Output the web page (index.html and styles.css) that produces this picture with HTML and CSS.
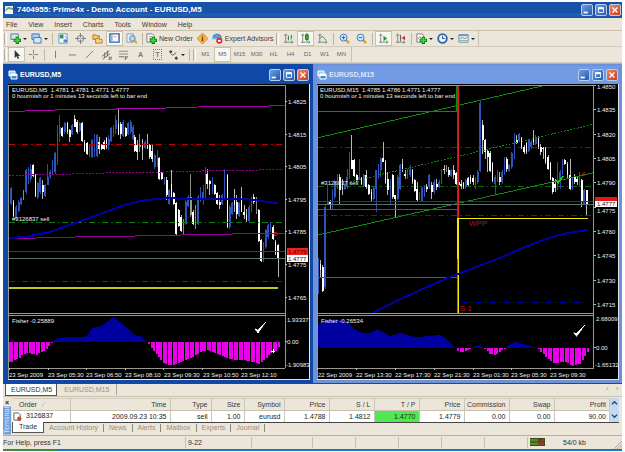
FILE: index.html
```html
<!DOCTYPE html>
<html lang="en">
<head>
<meta charset="utf-8">
<title>7404955: Prime4x - Demo Account - EURUSD,M5</title>
<link rel="stylesheet" href="styles.css">
</head>
<body>
<svg class="defs" aria-hidden="true">
  <defs>
    <symbol id="min" viewBox="0 0 12 12"><path d="M2 8h5v2H2z" fill="#fff"/></symbol>
    <symbol id="max" viewBox="0 0 12 12"><path d="M3 3h6v6H3z" fill="none" stroke="#fff"/><path d="M3 3h6v2H3z" fill="#fff"/></symbol>
    <symbol id="close" viewBox="0 0 12 12"><path d="M3 3l6 6M9 3l-6 6" stroke="#fff" stroke-width="1.6"/></symbol>
    <symbol id="chartwin" viewBox="0 0 10 10"><path d="M1 1h6v5H1z" fill="#9cf" stroke="#fff"/><path d="M3 4h6v5H3z" fill="#48c" stroke="#fff"/><path d="M3 4h6v2H3z" fill="#fff"/></symbol>
    <symbol id="axes" viewBox="0 0 12 12"><path d="M3 1v10M1 10h10M1.500 3L3 1l1.500 2M9 8.500l2 1.500-2 1.500" fill="none" stroke="#7b8480"/></symbol>
    <symbol id="plus" viewBox="0 0 12 12"><path d="M8 4v8M4 8h8" stroke="#0a7a10" stroke-width="3.600"/><path d="M8 5v6M5 8h6" stroke="#3ddc3d" stroke-width="1.800"/></symbol>
  </defs>
</svg>

<main class="app">
  <header class="titlebar">
    <svg class="i10" viewBox="0 0 10 10"><path d="M1 1h8v8H1z" fill="#e8f0ec"/><path d="M1 5l3-3 5 1v3H1z" fill="#7aa27a"/><path d="M1 6l4-2 4 1v4H1z" fill="#f4f4ec"/></svg>
    <h1>7404955: Prime4x - Demo Account - EURUSD,M5</h1>
    <div class="winbtns">
      <button aria-label="Minimize"><svg><use href="#min"/></svg></button>
      <button aria-label="Maximize"><svg><use href="#max"/></svg></button>
      <button class="x" aria-label="Close"><svg><use href="#close"/></svg></button>
    </div>
  </header>

  <nav class="menu">
    <a href="#">File</a><a href="#">View</a><a href="#">Insert</a><a href="#">Charts</a><a href="#">Tools</a><a href="#">Window</a><a href="#">Help</a>
  </nav>

  <div class="toolbar">
    <i class="grip"></i>
    <button class="drop" aria-label="New chart"><svg viewBox="0 0 12 12"><path d="M1 1h8v6H1z" fill="#cfe2ee" stroke="#4a7c9c"/><use href="#plus"/></svg></button>
    <button class="drop" aria-label="Profiles"><svg viewBox="0 0 12 12"><path d="M1 1h8v6H1z" fill="#a9d0f2" stroke="#3a76b4"/><path d="M3 5h8v6H3z" fill="#d6e9f8" stroke="#3a76b4"/></svg></button>
    <i class="sep"></i>
    <button aria-label="Market watch"><svg viewBox="0 0 12 12"><path d="M1 1h9v10H1z" fill="#fff" stroke="#49c"/><path d="M2 2h4v4H2z" fill="#2b9b4b"/><path d="M6 7h4v3H6z" fill="#3a8be0"/><path d="M7 3l3 3" stroke="#e55"/></svg></button>
    <button aria-label="Data window"><svg viewBox="0 0 12 12"><circle cx="6" cy="6" r="3.500" fill="none" stroke="#777"/><path d="M6 0v5M6 7v5M0 6h5M7 6h5" stroke="#777"/></svg></button>
    <button aria-label="Navigator"><svg viewBox="0 0 12 12"><path d="M1 2h3l1 1h3v4H1z" fill="#f3c562" stroke="#b67c20"/><path d="M4 6h3l1 1h3v4H4z" fill="#fbd87f" stroke="#b67c20"/></svg></button>
    <button class="on" aria-label="Terminal"><svg viewBox="0 0 12 12"><path d="M1 1h10v9H1z" fill="#fff" stroke="#2563b5" stroke-width="1.500"/><path d="M2 2h2v7H2z" fill="#8db9e8"/><path d="M5 4h1M7 4h1" stroke="#d33"/></svg></button>
    <button aria-label="Strategy tester"><svg viewBox="0 0 12 12"><path d="M1 1h7v9H1z" fill="#e9f2f8" stroke="#89a"/><circle cx="7" cy="6" r="3" fill="#b8dcf6" stroke="#4678aa"/><path d="M9 8l3 3" stroke="#d39b33" stroke-width="2"/></svg></button>
    <i class="sep"></i>
    <button class="text"><svg viewBox="0 0 12 12"><path d="M1 1h6l2 2v7H1z" fill="#fff" stroke="#777"/><path d="M3 4h4M3 6h3" stroke="#999"/><use href="#plus"/></svg>New Order</button>
    <button aria-label="MetaEditor"><svg viewBox="0 0 12 12"><path d="M6 0l6 6-6 6-6-6z" fill="#f4b342" stroke="#d08c34"/><path d="M6 3v1M6 5v4" stroke="#743c00" stroke-width="1.500"/></svg></button>
    <button class="text"><svg viewBox="0 0 12 12"><path d="M1 5c0-5 9-5 9 0z" fill="#5aa1e0" stroke="#2d6aa8"/><path d="M0 5h11v2H0z" fill="#7fbaf0"/><circle cx="8" cy="8.500" r="3.300" fill="#d92c20"/><path d="M6.500 7.500h3v2h-3z" fill="#fff"/></svg>Expert Advisors</button>
    <i class="grip wide"></i>
    <button aria-label="Bar chart"><svg viewBox="0 0 12 12"><use href="#axes"/><path d="M6 3v5M9 2v5M5 6h1M9 4h1" stroke="#28823a"/></svg></button>
    <button class="on" aria-label="Candlesticks"><svg viewBox="0 0 12 12"><use href="#axes"/><path d="M7.500 0v9" stroke="#176b22"/><path d="M6 2h3v5H6z" fill="#29c13a" stroke="#176b22"/></svg></button>
    <button aria-label="Line chart"><svg viewBox="0 0 12 12"><use href="#axes"/><path d="M3 6c3-4 4-1 7 2" fill="none" stroke="#28823a"/></svg></button>
    <i class="sep"></i>
    <button aria-label="Zoom in"><svg viewBox="0 0 12 12"><path d="M7 7l4 4" stroke="#d5a02e" stroke-width="2.500"/><circle cx="5" cy="5" r="3.800" fill="#cfe9fb" stroke="#3977b5"/><path d="M5 3v4M3 5h4" stroke="#2463a5"/></svg></button>
    <button aria-label="Zoom out"><svg viewBox="0 0 12 12"><path d="M7 7l4 4" stroke="#d5a02e" stroke-width="2.500"/><circle cx="5" cy="5" r="3.800" fill="#cfe9fb" stroke="#3977b5"/><path d="M3 5h4" stroke="#2463a5"/></svg></button>
    <i class="sep"></i>
    <button class="on" aria-label="Auto scroll"><svg viewBox="0 0 12 12"><use href="#axes"/><path d="M6 3l4 3-4 3z" fill="#1b9c2b"/></svg></button>
    <button aria-label="Chart shift"><svg viewBox="0 0 12 12"><use href="#axes"/><path d="M6 2v7" stroke="#555"/><path d="M11 3L7 5.500 11 8z" fill="#c33"/></svg></button>
    <i class="sep"></i>
    <button class="drop" aria-label="Indicators"><svg viewBox="0 0 12 12"><path d="M1 1h6l1 2v7H1z" fill="#fff" stroke="#777"/><path d="M2 7l2-3 2 2" fill="none" stroke="#777"/><use href="#plus"/></svg></button>
    <button class="drop" aria-label="Periods"><svg viewBox="0 0 12 12"><circle cx="6" cy="6" r="4.700" fill="#e6f2fc" stroke="#2a68b4" stroke-width="2"/><path d="M6 3v3h2.500" fill="none" stroke="#345"/></svg></button>
    <button class="drop" aria-label="Templates"><svg viewBox="0 0 12 12"><path d="M1 2h10v8H1z" fill="#fff" stroke="#4a86b8"/><path d="M1 1.500h10v2H1z" fill="#5b9bd5"/><path d="M2 6l3-1 2 1 3-1" fill="none" stroke="#c44"/><path d="M2 8h8" stroke="#5a8"/></svg></button>
    <i class="end"></i>
  </div>

  <div class="toolbar second">
    <i class="grip"></i>
    <button class="on" aria-label="Cursor"><svg viewBox="0 0 12 12"><path d="M4 1v9l2-2 1.500 3 1.500-1-1.500-2.500H10z" fill="#333"/></svg></button>
    <button aria-label="Crosshair"><svg viewBox="0 0 12 12"><path d="M6 1v4M6 7v4M1 6h4M7 6h4" stroke="#777"/></svg></button>
    <i class="sep"></i>
    <button aria-label="Vertical line"><svg viewBox="0 0 12 12"><path d="M6 2v8" stroke="#777"/></svg></button>
    <button aria-label="Horizontal line"><svg viewBox="0 0 12 12"><path d="M2 6.500h8" stroke="#777"/></svg></button>
    <button aria-label="Trendline"><svg viewBox="0 0 12 12"><path d="M2 10l8-8" stroke="#777"/></svg></button>
    <button aria-label="Channel"><svg viewBox="0 0 12 12"><path d="M1 8l8-6M2 11l8-6M4 4v6M7 2v6M9 9h3M9 11h3M9 9v3" stroke="#666" fill="none"/></svg></button>
    <button aria-label="Fibonacci"><svg viewBox="0 0 12 12"><path d="M1 2.500h10M1 5.500h10" stroke="#888"/><path d="M1 8.500h6M8 12V8.500h3M8 10h2" fill="none" stroke="#666"/></svg></button>
    <button class="glyph">A</button>
    <button class="glyph"><span class="boxed">T</span></button>
    <button class="drop" aria-label="Arrows"><svg viewBox="0 0 12 12"><path d="M1 3l2-2 2 2-2 2zM7 10l2-2 2 2-2 2z" fill="#444"/><path d="M3 5l2 2 4-3" fill="none" stroke="#555"/></svg></button>
    <i class="sep"></i><i class="grip"></i>
    <button class="tf">M1</button><button class="tf on">M5</button><button class="tf">M15</button><button class="tf">M30</button><button class="tf">H1</button><button class="tf">H4</button><button class="tf">D1</button><button class="tf">W1</button><button class="tf">MN</button>
    <i class="end"></i>
  </div>

  <div class="mdi">
    <section class="child active">
      <header>
        <svg class="i10"><use href="#chartwin"/></svg>
        <h2>EURUSD,M5</h2>
        <div class="winbtns">
          <button aria-label="Minimize"><svg><use href="#min"/></svg></button>
          <button aria-label="Maximize"><svg><use href="#max"/></svg></button>
          <button class="x" aria-label="Close"><svg><use href="#close"/></svg></button>
        </div>
      </header>
      <svg class="chart" viewBox="8 84 301 295">
        <g transform="translate(0 62) scale(.33333)" fill="none" stroke-width="3">
          <g id="left-hist"></g>
          <g id="left-candles"></g>
          <path d="M27 148H75V146H165V143H350V139H465L535 137L625 134L810 132L855 130" stroke="#a800a8"/>
          <path d="M27 247H850" stroke="#c80000" stroke-dasharray="18 9 4 9"/>
          <path d="M27 340L180 337L350 332L465 331L640 326L850 323" stroke="#900090" stroke-dasharray="6 4"/>
          <path d="M27 481H850" stroke="#0a7d0a" stroke-dasharray="18 9 4 9"/>
          <path d="M27 531L165 526L350 523L465 521L620 517L855 514" stroke="#980098"/>
          <path d="M27 567h828v3h-828z" fill="#c80010"/>
          <path d="M27 588h828v3h-828z" fill="#54706c"/>
          <path d="M27 658H850" stroke="#a00000" stroke-dasharray="18 9 4 9"/>
          <path d="M27 675h808v6h-808z" fill="#c4c41c"/>
          <path d="M30 529L80 524L150 510L200 492L245 476L290 460L370 430L420 417L465 411L515 408L545 412L705 410L755 413L835 424" stroke="#0000a8" stroke-width="6"/>
          <circle cx="827" cy="516" r="5" stroke="#c00"/>
          <path d="M25 951V70H856V919H25M25 755H856M25 761H856" stroke="#989890"/>
          <path class="ticks" d="M856 120h5M856 217h5M856 315h5M856 414h5M856 510h5M856 607h5M856 706h5M856 840h5M28 919v6M145 919v6M260 919v6M377 919v6M492 919v6M609 919v6M725 919v6"/>
          <path d="M764 800l10 14l24-34l-24 24z" fill="#fff" stroke="#fff" stroke-width="1"/>
          <path d="M814 868h12M820 862v10" stroke="#fff"/>
        </g>
        <path d="M287 248h21v7h-21z" fill="#f02020"/><path d="M287 255h21v7h-21z" fill="#fff"/>
        <g class="lbl">
          <text x="12" y="92">EURUSD,M5&#160; 1.4781 1.4781 1.4771 1.4777</text>
          <text x="12" y="98">0 hourmish or 1 minutes 13 seconds left to bar end</text>
          <text x="12" y="221">#3126837 sell</text>
          <text x="12" y="323">Fisher -0.25889</text>
          <text x="288" y="104">1.4825</text><text x="288" y="137">1.4815</text><text x="288" y="169">1.4805</text><text x="288" y="202">1.4795</text><text x="288" y="234">1.4785</text><text x="288" y="267">1.4775</text><text x="288" y="300">1.4765</text>
          <text x="288" y="254" class="dark">1.4779</text><text x="288" y="261" class="dark">1.4777</text>
          <text x="287" y="322">1.93337</text><text x="287" y="344">0.00</text><text x="286" y="367">-1.90983</text>
          <text x="9" y="377">23 Sep 2009</text><text x="48" y="377">23 Sep 05:30</text><text x="86" y="377">23 Sep 06:50</text><text x="125" y="377">23 Sep 08:10</text><text x="164" y="377">23 Sep 09:30</text><text x="203" y="377">23 Sep 10:50</text><text x="241" y="377">23 Sep 12:10</text>
        </g>
      </svg>
    </section>

    <section class="child">
      <header>
        <svg class="i10"><use href="#chartwin"/></svg>
        <h2>EURUSD,M15</h2>
        <div class="winbtns">
          <button aria-label="Minimize"><svg><use href="#min"/></svg></button>
          <button aria-label="Maximize"><svg><use href="#max"/></svg></button>
          <button class="x" aria-label="Close"><svg><use href="#close"/></svg></button>
        </div>
      </header>
      <svg class="chart" viewBox="317 84 301 295">
        <g transform="translate(0 62) scale(.33333)" fill="none" stroke-width="3">
          <g id="right-hist"></g>
          <path d="M954 256H1775" stroke="#a80000" stroke-dasharray="18 9 4 9"/>
          <path d="M954 375H1775" stroke="#0a6a0a" stroke-dasharray="18 9 4 9"/>
          <path d="M954 462H1775" stroke="#780060" stroke-dasharray="18 9 4 9"/>
          <g id="right-candles"></g>
          <path d="M954 147h414V70h3v80h-417z" fill="#108a10"/>
          <path d="M954 227L1635 70M954 519L1781 332" stroke="#108a10"/>
          <path d="M1040 362L1780 187" stroke="#108a10" stroke-dasharray="5 5"/>
          <path d="M954 417h828v3h-828z" fill="#b80010"/>
          <path d="M954 426h828v3h-828z" fill="#54706c"/>
          <path d="M954 441h417v3h-417zM954 645h417v3h-417z" fill="#c82038"/>
          <path d="M1372 70V646" stroke="#c01060"/>
          <path d="M1376 70V470" stroke="#e02020" stroke-width="5"/>
          <path d="M1374 755V470H1763" stroke="#f0e800" stroke-width="5"/>
          <path d="M1372 590V755" stroke="#888010"/>
          <path d="M1378 722H1763" stroke="#0000c8" stroke-dasharray="3 4"/>
          <path d="M1116 753L1196 714L1266 682L1361 640L1395 628L1495 590L1575 555L1655 525L1710 512L1763 504" stroke="#0000a8" stroke-width="6"/>
          <path d="M1667 354l8 8 14-20" stroke="#10d810" stroke-width="5"/>
          <circle cx="1752" cy="336" r="5" stroke="#c00"/>
          <path d="M953 951V70H1782V919H953M953 755H1782M953 761H1782" stroke="#989890"/>
          <path class="ticks" d="M1782 72h5M1782 144h5M1782 217h5M1782 290h5M1782 363h5M1782 436h5M1782 510h5M1782 582h5M1782 655h5M1782 728h5M1782 857h5M954 919v6M1071 919v6M1187 919v6M1304 919v6M1420 919v6M1536 919v6M1652 919v6"/>
          <path d="M1720 812l10 12l24-34l-24 24z" fill="#fff" stroke="#fff" stroke-width="1"/>
        </g>
        <path d="M595 197h22v4h-22z" fill="#e01818"/><path d="M595 201h22v6h-22z" fill="#fff"/>
        <g class="lbl">
          <text x="320" y="92">EURUSD,M15&#160; 1.4785 1.4786 1.4771 1.4777</text>
          <text x="320" y="98">0 hourmish or 1 minutes 13 seconds left to bar end</text>
          <text x="321" y="185">#3126837 sell</text>
          <text x="321" y="323">Fisher -0.26534</text>
          <text x="597" y="89">1.4850</text><text x="597" y="112">1.4835</text><text x="597" y="137">1.4820</text><text x="597" y="161">1.4805</text><text x="597" y="185">1.4790</text><text x="597" y="206" class="dark">1.4777</text><text x="597" y="213">1.4775</text><text x="597" y="234">1.4760</text><text x="597" y="258">1.4745</text><text x="597" y="283">1.4730</text><text x="597" y="307">1.4715</text>
          <text x="596" y="321">2.68009</text><text x="596" y="350">0.00</text><text x="595" y="367">-1.65132</text>
          <text x="318" y="377">22 Sep 2009</text><text x="356" y="377">22 Sep 13:30</text><text x="395" y="377">22 Sep 17:30</text><text x="434" y="377">22 Sep 21:30</text><text x="473" y="377">23 Sep 01:30</text><text x="511" y="377">23 Sep 05:30</text><text x="550" y="377">23 Sep 09:30</text>
        </g>
        <g class="note"><text x="469" y="226">WPP</text><text x="460" y="311">S 1</text></g>
      </svg>
    </section>
  </div>

  <nav class="charttabs">
    <a href="#" class="cur">EURUSD,M5</a><a href="#">EURUSD,M15</a>
    <span class="arrows"><button aria-label="Previous">‹</button><button aria-label="Next">›</button></span>
  </nav>

  <section class="terminal">
    <aside><button aria-label="Close terminal">×</button><span>Terminal</span></aside>
    <div class="orders">
      <div class="grid">
        <table>
          <colgroup><col class="c58"><col class="c100"><col class="c41"><col class="c33"><col class="c40"><col class="c45"><col class="c45"><col class="c45"><col class="c45"><col class="c45"><col class="c45"><col></colgroup>
          <thead><tr><th>Order <span>⁄</span></th><th>Time</th><th>Type</th><th>Size</th><th>Symbol</th><th>Price</th><th>S / L</th><th>T / P</th><th>Price</th><th>Commission</th><th>Swap</th><th>Profit</th></tr></thead>
          <tbody><tr><td><svg viewBox="0 0 10 10"><path d="M1 1h5l2 2v6H1z" fill="#fff" stroke="#555"/><circle cx="7" cy="7.500" r="2.500" fill="#d4441c"/></svg>3126837</td><td>2009.09.23 10:35</td><td>sell</td><td>1.00</td><td>eurusd</td><td>1.4788</td><td>1.4812</td><td class="tp">1.4770</td><td>1.4779</td><td>0.00</td><td>0.00</td><td>90.00</td></tr></tbody>
        </table>
        <div class="scroll">
          <button aria-label="Scroll up"><svg viewBox="0 0 8 8"><path d="M1 5l3-3 3 3" fill="none" stroke="#246" stroke-width="1.500"/></svg></button>
          <button aria-label="Scroll down"><svg viewBox="0 0 8 8"><path d="M1 3l3 3 3-3" fill="none" stroke="#246" stroke-width="1.500"/></svg></button>
        </div>
      </div>
      <nav class="termtabs">
        <a href="#" class="cur">Trade</a><a href="#">Account History</a><a href="#">News</a><a href="#">Alerts</a><a href="#">Mailbox</a><a href="#">Experts</a><a href="#">Journal</a>
      </nav>
    </div>
  </section>

  <footer class="status">
    <span class="help">For Help, press F1</span><span class="s66">9-22</span><span class="s61"></span><span class="s43"></span><span class="s43"></span><span class="s43"></span><span class="s43"></span><span class="s43"></span>
    <span class="net"><svg viewBox="0 0 15 8"><path d="M0 0h15v8H0z" fill="#3c4a18"/><path d="M1 1v6M3 1v6M5 1v6M7 1v6" stroke="#6c4"/><path d="M9 3v4M11 2v5M13 1v6" stroke="#e33"/><path d="M0 4h15" stroke="#3c4a18"/></svg>54/0 kb</span>
    <svg class="resize" viewBox="0 0 10 10"><path d="M1 10l9-9M4 10l6-6M7 10l3-3" stroke="#a8a090"/></svg>
  </footer>
</main>
<div class="taskbar"><i></i></div>
<script src="chart.js"></script>
</body>
</html>
```
FILE: styles.css
```css
* { box-sizing: border-box; }
body { margin: 0; padding-top: 2px; background: #fff; font: 7px/9px "Liberation Sans", Arial, sans-serif; color: #3a3a38; }
a { color: inherit; text-decoration: none; }
button { font: inherit; color: inherit; border: 0; padding: 0; margin: 0; background: none; display: flex; align-items: center; justify-content: center; }
h1, h2 { margin: 0; color: #fff; }
.defs { position: absolute; width: 0; height: 0; }
.app { margin: 0 3px; background: #ebe5da; }
.i10 { width: 10px; height: 10px; flex: none; }

.titlebar { height: 16px; display: flex; align-items: center; gap: 3px; padding: 0 1px 0 1px; background: linear-gradient(#1852a8 65%, #1f62b4 80%, #1450a4); }
.titlebar h1 { font-size: 8px; line-height: 12px; flex: 1; }
.winbtns { display: flex; gap: 2px; }
.winbtns button { width: 12px; height: 12px; border: 1px solid #b8cdea; border-radius: 2px; background: linear-gradient(135deg, #6f9fdf, #2459ad); }
.winbtns .x { background: linear-gradient(135deg, #f08a64, #c8381c); }
.winbtns svg { width: 10px; height: 10px; }

.menu { height: 13px; display: flex; gap: 11px; align-items: center; padding-left: 3px; border-bottom: 1px solid #c8c0ac; }
.toolbar { height: 16px; display: flex; align-items: center; border-bottom: 1px solid #d3cbb9; }
.toolbar button { width: 17px; height: 15px; flex: none; }
.toolbar svg { width: 11px; height: 11px; }
.toolbar .on { background: #f8f6f0; border: 1px solid #c8c2b2; }
.toolbar .text { width: auto; gap: 2px; padding: 0 1px; }
.toolbar .drop { width: 21px; gap: 2px; }
.toolbar .drop::after { content: ""; border: 2px solid transparent; border-top-color: #222; border-bottom: 0; }
.grip { width: 3px; height: 12px; margin: 0 1px; border-left: 1px solid #b5ad9b; border-right: 1px solid #fff; }
.grip.wide { margin-left: 2px; }
.sep { width: 1px; height: 12px; margin: 0 2px; background: #bdb5a4; }
.end { width: 1px; height: 15px; background: #c9c1b0; margin-left: 1px; }
.toolbar .tf { font-size: 6px; color: #666; }
.toolbar .glyph { font-weight: bold; color: #777; }
.boxed { border: 1px dotted #777; width: 9px; }

.mdi { display: grid; grid-template-columns: 310fr 309fr; background: #7b98c8; }
.child { padding: 2px 3px 3px 4px; background: #6f92d6; border-top: 1px solid #9db5dd; }
.child.active { padding-left: 5px; background: #1048a8; }
.child header { height: 18px; display: flex; align-items: center; gap: 2px; padding-right: 1px; }
.child h2 { font-size: 7px; line-height: 10px; flex: 1; color: #dce6f8; }
.child.active h2 { color: #fff; }
.child:not(.active) header { background: #709ae4; }
.chart { display: block; width: 100%; height: auto; background: #000; border-right: 1px solid #dde4ee; border-bottom: 1px solid #dde4ee; shape-rendering: crispEdges; }
.lbl { font: 6px "Liberation Sans", Arial, sans-serif; fill: #f0f0f0; }
.lbl .dark { fill: #400; }
.note { font: 8px "Liberation Sans", Arial, sans-serif; fill: #c01010; }
.ticks { stroke: #bbb; }

.charttabs { height: 14px; display: flex; align-items: flex-start; border-top: 1px solid #444; padding-left: 2px; color: #9a9484; border-bottom: 1px solid #c9c1b0; }
.charttabs a { padding: 1px 7px; border-right: 1px solid #aaa290; }
.charttabs .cur { background: #fff; color: #333; border: 1px solid #555; border-top: 0; padding: 1px 4px 1px 5px; }
.arrows { margin-left: auto; display: flex; gap: 7px; padding-right: 4px; }

.terminal { display: flex; padding-top: 1px; }
.terminal aside { width: 8px; display: flex; flex-direction: column; color: #dde9fa; }
.terminal aside button { color: #222; font-weight: bold; height: 9px; }
.terminal aside span { writing-mode: vertical-rl; transform: rotate(180deg); background: #6f9fe0; line-height: 8px; width: 8px; flex: 1; text-align: center; }
.orders { flex: 1; padding: 0 3px 0 1px; }
.grid { display: flex; border-bottom: 1px solid #444; }
table { flex: 1; width: 100%; table-layout: fixed; border-collapse: collapse; }
th, td { height: 12px; padding: 0 3px 0 0; font-weight: normal; text-align: right; border-right: 1px solid #ccc4b4; white-space: nowrap; }
th { border-top: 1px solid #d3cbb9; border-bottom: 1px solid #c8c0ae; }
th:first-child { text-align: left; padding-left: 7px; }
th span { color: #aaa; margin-left: 4px; }
tbody { background: #fff; color: #222; }
td { height: 11px; }
td:first-child { text-align: left; padding-left: 1px; }
td svg { width: 9px; height: 9px; margin-right: 4px; vertical-align: middle; }
td.tp { background: #50e850; }
.c58 { width: 58px; } .c100 { width: 100px; } .c41 { width: 41px; } .c33 { width: 33px; } .c40 { width: 40px; } .c45 { width: 45px; }
.scroll { width: 9px; display: flex; flex-direction: column; }
.scroll button { flex: 1; background: #c3d8f6; border-radius: 2px; }
.scroll svg { width: 7px; height: 7px; }
.termtabs { height: 12px; display: flex; align-items: flex-start; color: #969080; }
.termtabs a { padding: 0 5px; }
.termtabs a:not(.cur) { border-right: 1px solid #8f8978; line-height: 8px; margin-top: 1px; }
.termtabs .cur { background: #fff; color: #333; border: 1px solid #555; border-top: 0; padding: 0 6px; margin-top: -1px; height: 11px; line-height: 10px; }

.status { height: 14px; display: flex; align-items: center; border-top: 1px solid #b8b09e; color: #333; }
.status span { height: 11px; line-height: 11px; border-right: 1px solid #c8c0ae; padding-left: 2px; }
.status .help { width: 183px; padding-left: 0; }
.s66 { width: 66px; } .s61 { width: 61px; } .s43 { width: 43px; }
.status .net { display: flex; align-items: center; gap: 18px; border: 0; flex: 1; }
.net svg { width: 15px; height: 8px; }
.resize { width: 9px; height: 9px; align-self: flex-end; }
.taskbar { height: 2px; margin: 0 3px; background: #1a74c8; }
.taskbar i { display: block; width: 55px; height: 2px; background: #3c8a3c; }
```
FILE: chart.js
```js
// Candles: x, high, low, colour, optional body top and bottom (thirds of a pixel).
const left = `34,375,430,b 41,415,465,w 49,430,475,b 57,415,450,b 64,405,430,b 71,385,415,g 79,320,395,b 86,315,365,b 93,305,360,b,320,350 100,305,345,w 107,335,405,w 114,360,410,b 121,345,395,b 129,355,410,w,370,390 136,365,405,b 144,305,370,b,345,370 151,325,350,b 158,295,340,b 166,270,335,b 173,190,310,b,210,290 180,160,240,b,195,215 187,195,225,w 195,180,215,b 203,180,215,w 210,200,240,w,205,225 217,185,220,b 225,160,195,w,170,195 232,175,215,w 240,180,210,b 247,180,240,w 254,235,270,w 262,240,280,w 269,250,285,b 277,230,288,b 284,215,285,b,245,270 292,215,285,b 298,225,275,w,240,260 306,245,265,w 313,235,265,w 320,225,260,w 327,220,265,b,230,250 334,195,240,b 341,190,225,b 348,160,215,b,175,200 356,140,220,w,185,220 363,180,230,w,185,215 370,175,225,b 378,195,225,w 385,180,220,b 393,175,215,b 400,190,235,b 405,220,270,w 412,235,295,w,250,270 420,215,270,g,250,254 428,230,295,w,245,262 436,235,262,b 443,215,262,w,245,262 450,245,290,w 457,250,300,w,268,290 465,275,320,b 473,265,315,b 478,285,355,w 486,330,355,w 494,345,370,b 501,345,415,w,355,400 508,380,430,b 515,325,410,w,365,410 522,390,430,w 529,420,519,w 537,440,495,w 544,460,510,w 551,470,520,g 558,415,490,b 565,400,435,b 573,335,465,g,405,460 580,445,490,w 587,430,500,g 595,400,490,b 602,375,420,b 610,370,430,b,390,410 617,315,410,b,335,390 622,320,380,w,335,365 630,355,400,w,358,366 638,345,395,b 645,365,400,w 652,390,430,w 660,400,440,w,420,430 667,395,430,b 674,320,410,b 683,335,498,w 690,430,500,b 697,420,460,b 704,380,450,w,410,430 711,400,470,w,420,455 718,420,465,b 725,375,450,w,405,450 733,430,470,w,450,460 740,440,480,w,460,475 748,430,480,b 755,405,450,b 762,395,425,w,405,420 769,405,455,g 777,440,540,w 784,530,600,w 791,540,600,b 798,500,560,b 805,485,530,b 812,480,510,b 820,490,535,w 827,535,580,w 835,545,645,w,550,590`;
const right = `954,584,700,b 962,595,645,w,605,625 969,610,690,w 976,430,680,b 984,370,430,b,420,430 991,415,445,w,420,430 998,380,440,b 1005,355,410,b 1013,335,380,b 1020,335,430,w,345,385 1028,350,400,w,375,382 1035,365,385,b 1042,320,380,b,345,375 1049,270,350,b,290,345 1056,218,320,w,295,320 1063,290,345,w 1071,335,360,w 1078,290,355,b,345,355 1085,345,370,w 1092,335,375,b 1099,325,380,w,340,375 1107,365,400,w 1115,380,420,w,390,410 1122,375,415,b 1129,325,450,b,325,380 1136,305,350,b 1143,285,345,b,290,325 1150,240,300,w,288,300 1157,295,365,w 1164,330,400,w,350,385 1172,350,430,b,360,380 1179,335,410,w 1186,400,465,w,400,412 1194,340,415,b 1201,305,385,b 1208,290,330,w,305,325 1216,325,350,w,335,343 1223,320,350,b 1231,310,345,b,320,340 1238,320,365,w 1245,350,390,w 1252,360,420,w,380,415 1259,390,415,b 1267,375,420,b 1274,370,405,b 1281,365,390,w,375,382 1288,335,380,b 1296,360,410,w,370,390 1303,355,395,b 1311,350,385,w,365,375 1318,355,378,b 1325,320,365,b 1333,310,335,w,320,324 1340,310,330,g,320,324 1347,315,345,w,325,340 1354,320,345,b 1362,310,350,w,325,340 1369,330,370,w 1377,345,375,w,360,368 1384,355,380,w,366,372 1391,360,380,w 1398,350,380,b 1405,345,372,w 1412,340,365,w 1420,340,370,w,348,360 1427,345,380,b 1434,325,365,b 1441,118,330,b 1449,175,275,w,190,235 1456,230,290,w,235,270 1464,265,330,w,268,285 1471,268,330,w 1478,300,360,w 1486,340,395,b,345,365 1493,325,360,b 1500,330,370,w,345,360 1507,325,365,b 1514,285,340,b 1521,285,330,w,290,320 1528,305,330,b 1536,270,320,b 1544,212,290,b,235,285 1551,220,245,w,235,242 1558,212,240,b 1565,225,260,w 1573,250,275,w 1580,240,275,w 1587,230,270,b 1594,235,260,b 1601,205,250,w,230,240 1608,220,250,b 1616,222,260,w 1623,245,280,w,255,270 1630,255,290,w,258,262 1637,255,305,w 1645,280,325,w 1652,300,355,w 1659,345,395,w 1666,350,390,w,365,378 1673,300,385,b,355,375 1681,325,380,b,330,360 1688,290,340,b 1695,290,310,w 1703,300,350,w,305,340 1711,290,385,w,340,380 1718,345,385,b 1725,335,365,w,345,360 1732,345,370,w,352,360 1739,330,375,b 1746,350,435,w,355,420 1753,380,430,b 1761,385,458,w,385,425`;
const colours = { b: "#2f55b8", w: "#ffffff", g: "#9a9a8c" };
const wicks = { b: "#2c4ca0", w: "#b8b8b0", g: "#8c8c80" };

function candles(id, data) {
  const bodies = { b: "", w: "", g: "" };
  const lines = { b: "", w: "", g: "" };
  for (const item of data.split(" ")) {
    const [x, hi, lo, c, top, bottom] = item.split(",");
    const t = top ? +top : +hi + 4, b = bottom ? +bottom : +lo - 4;
    lines[c] += `M${x - 1.5} ${hi}h3V${lo}h-3z`;
    if (c !== "g" || top) bodies[c] += `M${x - 3} ${t}h5V${b}h-5z`;
  }
  const draw = (set, fills) => Object.keys(set)
    .map(c => `<path d="${set[c]}" fill="${fills[c]}"/>`).join("");
  document.getElementById(id).innerHTML = draw(lines, wicks) + draw(bodies, colours);
}

// Histogram envelope: flat list of x, y pairs around the zero line.
function histogram(id, zero, points) {
  let up = "", down = "";
  for (let i = 0; i + 3 < points.length; i += 2) {
    const [x0, y0, x1, y1] = points.slice(i, i + 4);
    if (y0 <= zero && y1 <= zero) up += `M${x0} ${zero}V${y0}L${x1} ${y1}V${zero}z`;
  }
  const heightAt = x => {
    for (let i = 0; i + 3 < points.length; i += 2) {
      const [x0, y0, x1, y1] = points.slice(i, i + 4);
      if (x >= x0 && x < x1) return y0 + (y1 - y0) * (x - x0) / (x1 - x0);
    }
    return zero;
  };
  for (let x = points[0]; x < points[points.length - 2]; x += 7.33) {
    const y = heightAt(x);
    if (y > zero + 2) down += `M${x} ${zero}h6V${y}h-6z`;
  }
  document.getElementById(id).innerHTML =
    `<path d="${up}" fill="#0000a0"/><path d="${down}" fill="#e800e8"/>`;
}

candles("left-candles", left);
candles("right-candles", right);
histogram("left-hist", 840, [27,900,37,900,45,892,55,889,65,879,75,874,90,874,105,879,120,872,135,862,155,840,175,829,195,826,245,826,262,822,275,799,305,792,337,767,350,772,380,796,405,819,425,824,440,840,450,854,470,879,485,899,495,907,520,910,550,896,575,886,600,869,620,864,645,874,665,882,690,892,730,894,755,899,775,907,790,894,810,874,825,869,835,852]);
histogram("right-hist", 857, [954,786,981,774,1001,770,1041,777,1061,799,1081,811,1106,814,1133,802,1146,809,1171,822,1201,812,1246,826,1286,822,1316,819,1336,826,1364,857,1376,871,1391,869,1410,860,1415,857,1440,847,1450,857,1465,874,1485,879,1505,864,1515,857,1545,837,1580,849,1610,857,1635,884,1660,904,1695,899,1715,912,1740,904,1755,879,1765,862]);
```
